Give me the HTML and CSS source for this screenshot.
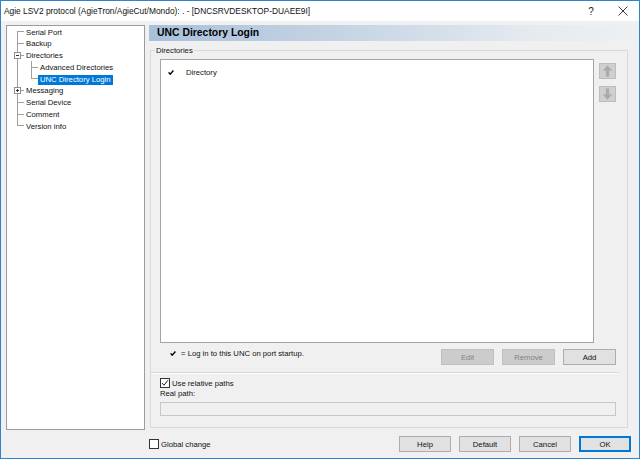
FILE: index.html
```html
<!DOCTYPE html>
<html>
<head>
<meta charset="utf-8">
<link rel="stylesheet" href="styles.css">
</head>
<body>
<div class="window">
  <div class="titlebar">
    <span class="title">Agie LSV2 protocol (AgieTron/AgieCut/Mondo): . - [DNCSRVDESKTOP-DUAEE9I]</span>
    <span class="tb-help">?</span>
    <span class="tb-close"><svg width="10" height="10" viewBox="0 0 10 10"><path d="M0.5 0.5 L9.5 9.5 M9.5 0.5 L0.5 9.5" stroke="#222" stroke-width="0.9" fill="none"/></svg></span>
  </div>
  <div class="client">
    <div class="main">
      <div class="tree">
        <svg class="tree-lines" width="60" height="110" viewBox="0 0 60 110">
          <g stroke="#a0a0a0" stroke-width="1" fill="none" shape-rendering="crispEdges">
            <path d="M10.5 5.5 V99.5"/>
            <path d="M10 5.5 H17 M10 17.5 H17 M13 29.5 H17 M13 64.5 H17 M10 76.5 H17 M10 88.5 H17 M10 99.5 H17"/>
            <path d="M24.5 35 V52.5 M24 41.5 H31 M24 52.5 H31"/>
          </g>
          <g shape-rendering="crispEdges">
            <rect x="7.5" y="26.5" width="6" height="6" fill="#fff" stroke="#8e8f8f"/>
            <path d="M9 29.5 H12" stroke="#333" fill="none"/>
            <rect x="7.5" y="61.5" width="6" height="6" fill="#fff" stroke="#8e8f8f"/>
            <path d="M9 64.5 H12 M10.5 63 V66" stroke="#333" fill="none"/>
          </g>
        </svg>
        <div class="node l0"><span class="lbl">Serial Port</span></div>
        <div class="node l0"><span class="lbl">Backup</span></div>
        <div class="node l0"><span class="lbl">Directories</span></div>
        <div class="node l1"><span class="lbl">Advanced Directories</span></div>
        <div class="node l1 sel"><span class="lbl">UNC Directory Login</span></div>
        <div class="node l0"><span class="lbl">Messaging</span></div>
        <div class="node l0"><span class="lbl">Serial Device</span></div>
        <div class="node l0"><span class="lbl">Comment</span></div>
        <div class="node l0"><span class="lbl">Version info</span></div>
      </div>
      <div class="page">
        <div class="page-header">UNC Directory Login</div>
        <div class="group">
          <span class="group-label">Directories</span>
          <div class="list-row">
            <div class="listview">
              <div class="lv-item">
                <svg class="check" width="6" height="5" viewBox="0 0 6 5"><path d="M0.6 2.4 L2.2 4.2 L5.4 0.5" stroke="#000" stroke-width="1.4" fill="none"/></svg>
                <span>Directory</span>
              </div>
            </div>
            <div class="arrows">
              <div class="arrow-btn"><svg width="15" height="14" viewBox="0 0 15 14"><path d="M7.5 1.5 L12 6.5 L9 6.5 L9 12.5 L6 12.5 L6 6.5 L3 6.5 Z" fill="#a9a9a9" stroke="#b5b5b5" stroke-width="0.5"/></svg></div>
              <div class="arrow-btn"><svg width="15" height="14" viewBox="0 0 15 14"><path d="M7.5 12.5 L12 7.5 L9 7.5 L9 1.5 L6 1.5 L6 7.5 L3 7.5 Z" fill="#a9a9a9" stroke="#b5b5b5" stroke-width="0.5"/></svg></div>
            </div>
          </div>
          <div class="actions">
            <div class="legend">
              <svg class="check" width="6" height="5" viewBox="0 0 6 5"><path d="M0.6 2.4 L2.2 4.2 L5.4 0.5" stroke="#000" stroke-width="1.4" fill="none"/></svg>
              <span>= Log in to this UNC on port startup.</span>
            </div>
            <div class="btns">
              <div class="btn disabled">Edit</div>
              <div class="btn disabled">Remove</div>
              <div class="btn">Add</div>
            </div>
          </div>
          <div class="sep"></div>
          <div class="chk-row">
            <span class="cb"><svg width="8" height="8" viewBox="0 0 8 8"><path d="M1 4 L3 6.2 L7 1.2" stroke="#222" stroke-width="1" fill="none"/></svg></span>
            <span>Use relative paths</span>
          </div>
          <div class="rp-label">Real path:</div>
          <div class="input"></div>
        </div>
      </div>
    </div>
    <div class="footer">
      <div class="chk-row">
        <span class="cb"></span>
        <span>Global change</span>
      </div>
      <div class="footer-btns">
        <div class="btn">Help</div>
        <div class="btn">Default</div>
        <div class="btn">Cancel</div>
        <div class="btn default">OK</div>
      </div>
    </div>
  </div>
</div>
</body>
</html>
```
FILE: styles.css
```css
* { box-sizing: border-box; margin: 0; padding: 0; }
html, body { width: 640px; height: 459px; overflow: hidden; }
body {
  font-family: "Liberation Sans", Arial, sans-serif;
  font-size: 7.7px;
  color: #111;
  background: #f0f0f0;
}
.window {
  width: 640px;
  height: 459px;
  border: 1px solid #2f83cf;
  display: flex;
  flex-direction: column;
  background: #f0f0f0;
}
.titlebar {
  height: 20px;
  flex: none;
  background: #fff;
  display: flex;
  align-items: center;
  padding-left: 3px;
}
.title { flex: 1; font-size: 8.4px; white-space: nowrap; }
.tb-help {
  width: 32px;
  text-align: center;
  font-size: 10px;
  color: #222;
}
.tb-close {
  width: 32px;
  display: flex;
  justify-content: center;
  align-items: center;
}
.client {
  flex: 1;
  display: flex;
  flex-direction: column;
  padding: 4px 4px 0 5px;
}
.main { display: flex; gap: 4px; height: 405px; flex: none; }
.tree {
  width: 139px;
  height: 405px;
  background: #fff;
  border: 1px solid #9c9c9c;
  padding-top: 1px;
  position: relative;
}
.tree-lines { position: absolute; left: 0; top: 0; }
.node {
  height: 11.75px;
  line-height: 11.75px;
  white-space: nowrap;
  position: relative;
}
.node .lbl { display: inline-block; padding: 0 2px; line-height: 10.5px; vertical-align: middle; }
.l0 { padding-left: 17px; }
.l1 { padding-left: 31px; }
.sel .lbl { background: #0078d7; color: #fff; }

.page { width: 486px; display: flex; flex-direction: column; }
.page-header {
  height: 16px;
  line-height: 16px;
  padding-left: 8px;
  font-size: 10.4px;
  font-weight: bold;
  color: #000;
  background: linear-gradient(to right, #a9c0da 0%, #c9d7e5 45%, #e6ebf0 80%, #eef0f2 100%);
}
.group {
  position: relative;
  margin: 9px 0 0 1px;
  width: 478px;
  height: 378px;
  border: 1px solid #d9d9d9;
  padding: 8px 11px 0 9px;
}
.group-label {
  position: absolute;
  top: -6.5px;
  left: 4px;
  padding: 0 1px;
  line-height: 11px;
  background: #f0f0f0;
}
.list-row { display: flex; gap: 5px; height: 284px; }
.listview {
  width: 434px;
  height: 284px;
  background: #fff;
  border: 1px solid #a5a5a5;
}
.lv-item {
  display: flex;
  align-items: center;
  height: 10px;
  margin-top: 7px;
  padding-left: 7px;
  gap: 12px;
}
.arrows { display: flex; flex-direction: column; gap: 7px; padding-top: 4px; }
.arrow-btn {
  width: 17px;
  height: 16px;
  background: #cfcfcf;
  border: 1px solid #bdbdbd;
  display: flex;
  align-items: center;
  justify-content: center;
}
.actions { display: flex; height: 16px; margin-top: 6px; }
.legend {
  display: flex;
  align-items: center;
  gap: 5px;
  padding-left: 10px;
  height: 10px;
  margin-top: -1px;
}
.btns { margin-left: auto; display: flex; gap: 8px; }
.btn {
  width: 53px;
  height: 16px;
  background: #e1e1e1;
  border: 1px solid #adadad;
  display: flex;
  align-items: center;
  justify-content: center;
}
.btn.disabled { background: #cccccc; border-color: #bfbfbf; color: #838383; }
.btn.default { border-color: #0078d7; box-shadow: inset 0 0 0 1px #0078d7; }
.sep {
  margin: 7px 0 0 -9px;
  width: 468px;
  height: 2px;
  border-top: 1px solid #d5d5d5;
  border-bottom: 1px solid #fff;
}
.chk-row { display: flex; align-items: center; height: 10px; gap: 2px; margin-top: 4px; }
.cb {
  width: 10px;
  height: 10px;
  border: 1px solid #333;
  background: #fff;
  display: flex;
  align-items: center;
  justify-content: center;
}
.rp-label { margin-top: 1px; line-height: 10px; height: 10px; }
.input {
  margin-top: 3px;
  width: 456px;
  height: 14px;
  background: #f0f0f0;
  border: 1px solid #c8c8c8;
}
.footer {
  display: flex;
  align-items: center;
  height: 16px;
  margin-top: 6px;
  padding-left: 143px;
  padding-right: 4px;
}
.footer .chk-row { margin-top: 0; }
.footer-btns { margin-left: auto; display: flex; gap: 8px; }
.footer-btns .btn { width: 52px; }
```
